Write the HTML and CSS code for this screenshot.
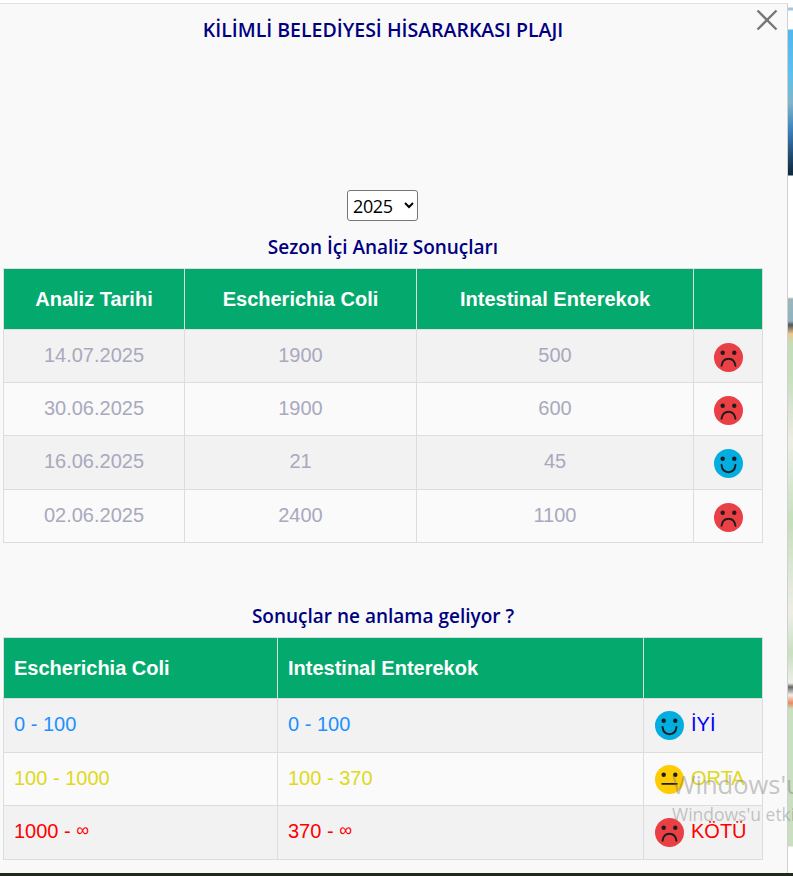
FILE: index.html
```html
<!DOCTYPE html>
<html lang="tr">
<head>
<meta charset="utf-8">
<title>Kilimli Belediyesi Hisararkası Plajı</title>
<link rel="stylesheet" href="styles.css">
</head>
<body>
<div class="backdrop" aria-hidden="true"></div>
<main class="modal">
  <button class="close" aria-label="Kapat">
    <svg width="22" height="22" viewBox="0 0 22 22"><path d="M1.500 1.500 20.500 20.500M20.500 1.500 1.500 20.500"/></svg>
  </button>
  <h1 class="title">KİLİMLİ BELEDİYESİ HİSARARKASI PLAJI</h1>
  <div class="year-row">
    <select class="year"><option>2025</option><option>2024</option></select>
  </div>
  <h2 class="subtitle">Sezon İçi Analiz Sonuçları</h2>
  <table class="data results">
    <colgroup><col class="r1"><col class="r2"><col class="r3"><col class="r4"></colgroup>
    <thead><tr><th>Analiz Tarihi</th><th>Escherichia Coli</th><th>Intestinal Enterekok</th><th></th></tr></thead>
    <tbody>
      <tr class="row-a"><td>14.07.2025</td><td>1900</td><td>500</td><td class="face-cell"><svg class="face" viewBox="0 0 30 30"><use href="#bad"/></svg></td></tr>
      <tr class="row-b"><td>30.06.2025</td><td>1900</td><td>600</td><td class="face-cell"><svg class="face" viewBox="0 0 30 30"><use href="#bad"/></svg></td></tr>
      <tr class="row-c"><td>16.06.2025</td><td>21</td><td>45</td><td class="face-cell"><svg class="face" viewBox="0 0 30 30"><use href="#good"/></svg></td></tr>
      <tr class="row-d"><td>02.06.2025</td><td>2400</td><td>1100</td><td class="face-cell"><svg class="face" viewBox="0 0 30 30"><use href="#bad"/></svg></td></tr>
    </tbody>
  </table>
  <h2 class="subtitle second">Sonuçlar ne anlama geliyor ?</h2>
  <table class="data legend">
    <colgroup><col class="l1"><col class="l2"><col class="l3"></colgroup>
    <thead><tr><th>Escherichia Coli</th><th>Intestinal Enterekok</th><th></th></tr></thead>
    <tbody>
      <tr class="good"><td>0 - 100</td><td>0 - 100</td><td><span class="status"><svg class="face" viewBox="0 0 30 30"><use href="#good"/></svg><span class="label">İYİ</span></span></td></tr>
      <tr class="mid"><td>100 - 1000</td><td>100 - 370</td><td><span class="status"><svg class="face" viewBox="0 0 30 30"><use href="#mid"/></svg><span class="label">ORTA</span></span></td></tr>
      <tr class="bad"><td>1000 - <span class="inf">∞</span></td><td>370 - <span class="inf">∞</span></td><td><span class="status"><svg class="face" viewBox="0 0 30 30"><use href="#bad"/></svg><span class="label">KÖTÜ</span></span></td></tr>
    </tbody>
  </table>
</main>
<div class="watermark" aria-hidden="true">
  <div class="wm-big">Windows'u etkinleştir</div>
  <div class="wm-small">Windows'u etkinleştirmek için</div>
</div>
<svg class="defs" width="0" height="0" aria-hidden="true">
  <defs>
    <g id="bad"><circle cx="15" cy="15" r="15" fill="#ea4045"/><circle cx="9" cy="10" r="2.300" fill="#1d1d1d"/><circle cx="21" cy="10" r="2.300" fill="#1d1d1d"/><path d="M7.800 23.500C8.500 18.500 11 16.200 15 16.200S21.500 18.500 22.200 23.500" fill="none" stroke="#1d1d1d" stroke-width="2" stroke-linecap="round"/></g>
    <g id="good"><circle cx="15" cy="15" r="15" fill="#02aee0"/><circle cx="9" cy="10" r="2.300" fill="#1d1d1d"/><circle cx="21" cy="10" r="2.300" fill="#1d1d1d"/><path d="M7.800 16.500C8.300 21.500 11 24 15 24S21.700 21.500 22.200 16.500" fill="none" stroke="#1d1d1d" stroke-width="2" stroke-linecap="round"/></g>
    <g id="mid"><circle cx="15" cy="15" r="15" fill="#ffcc02"/><circle cx="9" cy="10" r="2.300" fill="#1d1d1d"/><circle cx="21" cy="10" r="2.300" fill="#1d1d1d"/><path d="M7.500 19.500H22.500" fill="none" stroke="#1d1d1d" stroke-width="2" stroke-linecap="round"/></g>
  </defs>
</svg>
</body>
</html>
```

FILE: styles.css
```css
html, body {
  margin: 0;
  height: 876px;
  overflow: hidden;
}

body {
  position: relative;
  background: #fff;
  font-family: "Liberation Sans", Arial, sans-serif;
}

.backdrop {
  position: absolute;
  left: 780px;
  top: 3px;
  width: 13px;
  height: 870px;
  background: linear-gradient(180deg,
    #fff 0, #fff 4px, #a9c4de 5px, #a9c4de 7px, #fff 8px, #fff 26px, #4fb8ec 27px, #5cc0ee 70px,
    #7fb6c8 100px, #3e86c2 125px, #16324c 165px, #122a3e 172px, #fff 173px,
    #fff 294px, #9fb4ba 296px, #8eb4c0 318px, #555 322px, #f0c890 331px,
    #c5dcb8 340px, #c8e0c0 380px, #eeeee6 440px, #c5dfbc 520px, #efeee8 610px,
    #c8e0c0 650px, #efeee8 680px, #666 684px, #efeee8 692px, #e88a60 700px, #c8e0c0 706px,
    #c8e0c0 760px, #c8e0c0 843px, #fff 844px);
}

.backdrop::after {
  content: "";
  position: absolute;
  left: -780px;
  right: 0;
  bottom: -3px;
  height: 3px;
  background: #1f2a1c;
}

.modal {
  position: relative;
  box-sizing: border-box;
  width: 788px;
  height: 870px;
  margin-top: 3px;
  padding: 1px 0 0 3px;
  background: #f9f9f9;
  border-top: 1px solid #e3e3e3;
  border-right: 1px solid #d0d0d0;
}

.close {
  position: absolute;
  top: 5px;
  right: 9px;
  padding: 0;
  border: 0;
  background: none;
  line-height: 0;
}

.close path {
  fill: none;
  stroke: #777;
  stroke-width: 2.400;
}

.title,
.subtitle {
  margin: 0;
  width: 760px;
  text-align: center;
  color: #000080;
  font-family: "Open Sans", sans-serif;
  font-weight: 600;
}

.title {
  padding-top: 12px;
  font-size: 19.500px;
  line-height: 26px;
}

.year-row {
  box-sizing: border-box;
  width: 760px;
  margin-top: 147px;
  padding-right: 1px;
  text-align: center;
}

.year {
  box-sizing: border-box;
  width: 71px;
  height: 31px;
  padding: 0 0 0 1px;
  font-family: "Open Sans", sans-serif;
  font-size: 18px;
  letter-spacing: -0.400px;
  color: #000;
  background: #fff;
  border: 1px solid #767676;
  border-radius: 3px;
}

.subtitle {
  margin-top: 13px;
  height: 34px;
  font-size: 19px;
  line-height: 26px;
}

.subtitle.second {
  margin-top: 59px;
  height: 35px;
  line-height: 28px;
}

.data {
  border-collapse: collapse;
  table-layout: fixed;
  width: 760px;
  font-size: 20px;
}

.data th,
.data td {
  border: 1px solid #ddd;
  padding: 0;
}

.data th {
  height: 60px;
  background: #04aa6d;
  color: #fff;
  font-weight: 700;
}

.data tbody tr:nth-child(odd) {
  background: #f2f2f2;
}

.data tbody tr:nth-child(even) {
  background: #fafafa;
}

.results th,
.results td {
  text-align: center;
}

.results td {
  height: 50px;
  padding-bottom: 2px;
  color: #a9a9bd;
}

.results .row-c td {
  height: 51px;
}

.r1 { width: 181px; }
.r2 { width: 232px; }
.r3 { width: 277px; }
.r4 { width: 69px; }

.l1 { width: 274px; }
.l2 { width: 366px; }
.l3 { width: 119px; }

.legend th,
.legend td {
  padding-left: 10px;
  text-align: left;
}

.legend td {
  height: 51px;
  padding-bottom: 2px;
}

.legend .mid td {
  height: 50px;
}

.face {
  display: inline-block;
  width: 29px;
  height: 29px;
  vertical-align: middle;
}

.face-cell .face {
  position: relative;
  top: 2px;
}

.status {
  position: relative;
  top: 1px;
  display: flex;
  align-items: center;
  gap: 7px;
  margin-left: 1px;
}

.label {
  position: relative;
  top: -1px;
}

.inf {
  position: relative;
  top: -2px;
  font-size: 18px;
}

.good td { color: #1e90ff; }
.good .label { color: #0000ff; }
.mid td { color: #e0d820; }
.bad td { color: #ff0000; }

.watermark {
  position: absolute;
  left: 672px;
  top: 768px;
  width: 121px;
  overflow: hidden;
  white-space: nowrap;
  color: rgba(120, 120, 120, 0.42);
  font-family: "Open Sans", sans-serif;
  pointer-events: none;
}

.wm-big {
  font-size: 25.500px;
  line-height: 33px;
}

.wm-small {
  font-size: 17.500px;
  line-height: 26px;
}

.defs {
  position: absolute;
}
```
